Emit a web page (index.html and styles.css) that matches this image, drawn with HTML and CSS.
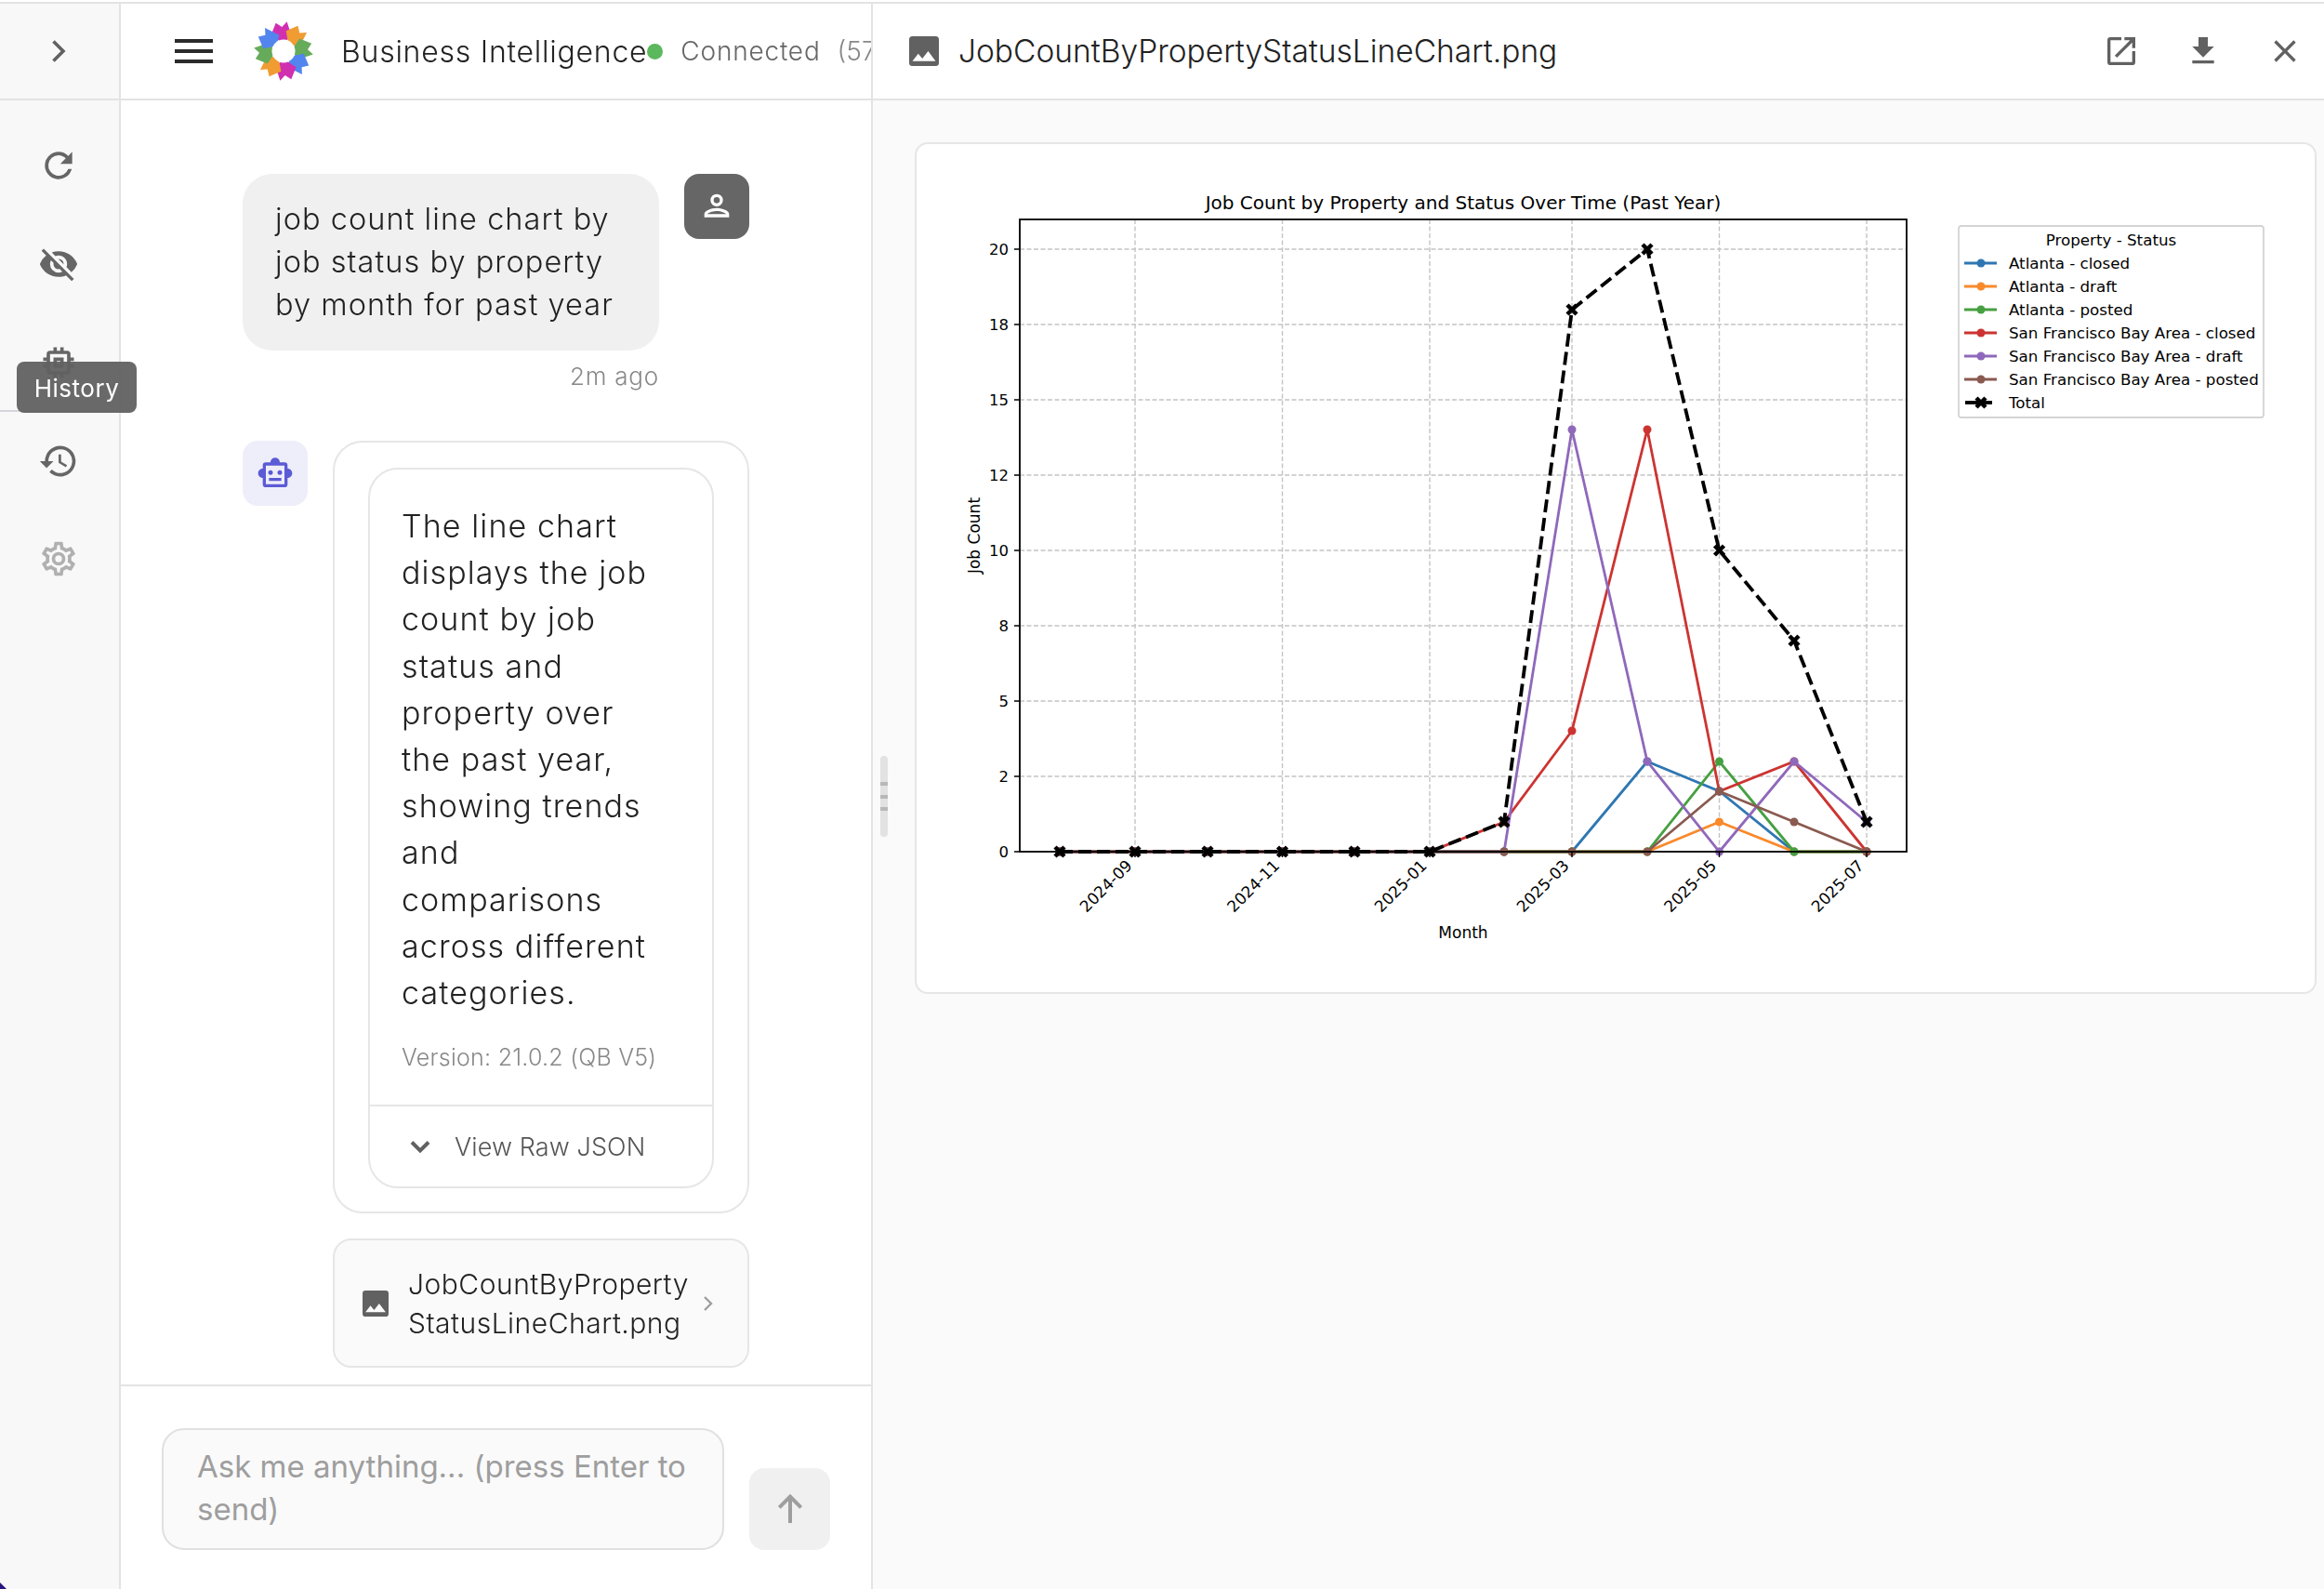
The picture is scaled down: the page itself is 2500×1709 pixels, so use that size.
FILE: index.html
```html
<!DOCTYPE html>
<html lang="en">
<head>
<meta charset="utf-8">
<title>Business Intelligence</title>
<link rel="stylesheet" href="styles.css">
</head>
<body>
<div class="app">
  <aside class="rail">
    <div class="rail-head">
      <svg class="ic-chev" viewBox="0 0 24 24"><path d="M9 5l7 7-7 7" fill="none" stroke="#616161" stroke-width="2.4"/></svg>
    </div>
    <div class="rail-top">
      <svg class="ic" viewBox="0 0 24 24"><path fill="#666" d="M17.65 6.35A7.96 7.96 0 0 0 12 4a8 8 0 1 0 7.73 10h-2.08A6 6 0 1 1 12 6c1.66 0 3.14.69 4.22 1.78L13 11h7V4l-2.35 2.35z"/></svg>
      <svg class="ic ic-eye" viewBox="0 0 24 24"><path fill="#666" d="M12 7c2.76 0 5 2.24 5 5 0 .65-.13 1.26-.36 1.83l2.92 2.92A11.8 11.8 0 0 0 23 12c-1.73-4.39-6-7.5-11-7.5-1.4 0-2.74.25-3.98.7l2.16 2.16C10.74 7.13 11.35 7 12 7zM2 4.27l2.28 2.28.46.46A11.8 11.8 0 0 0 1 12c1.73 4.39 6 7.5 11 7.5 1.55 0 3.03-.3 4.38-.84l.42.42L19.73 22 21 20.73 3.27 3 2 4.27zM7.53 9.8l1.55 1.55A2.8 2.8 0 0 0 9 12a3 3 0 0 0 3 3c.22 0 .44-.03.65-.08l1.55 1.55c-.67.33-1.41.53-2.2.53a5 5 0 0 1-5-5c0-.79.2-1.53.53-2.2zm4.31-.78l3.15 3.15L15 12a3 3 0 0 0-3-3l-.16.02z"/></svg>
      <svg class="ic" viewBox="0 0 24 24"><path fill="#666" d="M15 9H9v6h6V9zm-2 4h-2v-2h2v2zm8-2V9h-2V7a2 2 0 0 0-2-2h-2V3h-2v2h-2V3H9v2H7a2 2 0 0 0-2 2v2H3v2h2v2H3v2h2v2a2 2 0 0 0 2 2h2v2h2v-2h2v2h2v-2h2a2 2 0 0 0 2-2v-2h2v-2h-2v-2h2zm-4 6H7V7h10v10z"/></svg>
    </div>
    <div class="rail-bottom">
      <svg class="ic" viewBox="0 0 24 24"><path fill="#666" d="M13 3a9 9 0 0 0-9 9H1l3.89 3.89.07.14L9 12H6a7 7 0 1 1 2.05 4.95l-1.42 1.42A9 9 0 1 0 13 3zm-1 5v5l4.28 2.54.72-1.21-3.5-2.08V8H12z"/></svg>
      <svg class="ic" viewBox="0 0 24 24"><path fill="#b0b0b0" d="M19.43 12.98c.04-.32.07-.64.07-.98s-.03-.66-.07-.98l2.11-1.65a.5.5 0 0 0 .12-.64l-2-3.46a.5.5 0 0 0-.61-.22l-2.49 1a7.3 7.3 0 0 0-1.69-.98l-.38-2.65A.49.49 0 0 0 14 2h-4a.49.49 0 0 0-.49.42l-.38 2.65c-.61.25-1.17.59-1.69.98l-2.49-1a.57.57 0 0 0-.18-.03.5.5 0 0 0-.43.25l-2 3.46a.49.49 0 0 0 .12.64l2.11 1.65c-.04.32-.07.65-.07.98s.03.66.07.98l-2.11 1.65a.5.5 0 0 0-.12.64l2 3.46a.5.5 0 0 0 .61.22l2.49-1c.52.4 1.08.73 1.69.98l.38 2.65c.03.24.24.42.49.42h4c.25 0 .46-.18.49-.42l.38-2.65c.61-.25 1.17-.59 1.69-.98l2.49 1a.57.57 0 0 0 .18.03.5.5 0 0 0 .43-.25l2-3.46a.5.5 0 0 0-.12-.64l-2.11-1.65zm-1.98-1.71c.04.31.05.52.05.73s-.02.43-.05.73l-.14 1.13.89.7 1.08.84-.7 1.21-1.27-.51-1.04-.42-.9.68c-.43.32-.84.56-1.25.73l-1.06.43-.16 1.13-.2 1.35h-1.4l-.19-1.35-.16-1.13-1.06-.43c-.43-.18-.83-.41-1.23-.71l-.91-.7-1.06.43-1.27.51-.7-1.21 1.08-.84.89-.7-.14-1.13c-.03-.31-.05-.54-.05-.74s.02-.43.05-.73l.14-1.13-.89-.7-1.08-.84.7-1.21 1.27.51 1.04.42.9-.68c.43-.32.84-.56 1.25-.73l1.06-.43.16-1.13.2-1.35h1.39l.19 1.35.16 1.13 1.06.43c.43.18.83.41 1.23.71l.91.7 1.06-.43 1.27-.51.7 1.21-1.07.85-.89.7.14 1.13zM12 8a4 4 0 1 0 0 8 4 4 0 0 0 0-8zm0 6a2 2 0 1 1 0-4 2 2 0 0 1 0 4z"/></svg>
    </div>
    <div class="tooltip">History</div>
    <div class="corner"></div>
  </aside>

  <main class="chat">
    <header class="chat-head">
      <div class="burger"><span></span><span></span><span></span></div>
      <svg class="logo" viewBox="-32 -32 64 64">
        <polygon points="-11,-19 -4,-31 2,-26 8,-31 11,-14 0,-9" fill="#d030b0" transform="rotate(-8)"/>
        <polygon points="-11,-19 -4,-31 2,-26 8,-31 11,-14 0,-9" fill="#f09c32" transform="rotate(37)"/>
        <polygon points="-11,-19 -4,-31 2,-26 8,-31 11,-14 0,-9" fill="#66ab5a" transform="rotate(82)"/>
        <polygon points="-11,-19 -4,-31 2,-26 8,-31 11,-14 0,-9" fill="#5285ee" transform="rotate(127)"/>
        <polygon points="-11,-19 -4,-31 2,-26 8,-31 11,-14 0,-9" fill="#d030b0" transform="rotate(172)"/>
        <polygon points="-11,-19 -4,-31 2,-26 8,-31 11,-14 0,-9" fill="#f09c32" transform="rotate(217)"/>
        <polygon points="-11,-19 -4,-31 2,-26 8,-31 11,-14 0,-9" fill="#66ab5a" transform="rotate(262)"/>
        <polygon points="-11,-19 -4,-31 2,-26 8,-31 11,-14 0,-9" fill="#5285ee" transform="rotate(307)"/>
        <circle r="12.5" fill="#fff"/>
      </svg>
      <span class="brand">Business Intelligence</span>
      <span class="dot"></span>
      <span class="status">Connected</span>
      <span class="count">(57</span>
    </header>

    <div class="messages">
      <div class="user-row">
        <div class="user-col">
          <div class="bubble">job count line chart by job status by property by month for past year</div>
          <div class="time">2m ago</div>
        </div>
        <div class="avatar avatar-user">
          <svg viewBox="0 0 24 24"><path fill="#fff" d="M12 6a2 2 0 1 1 0 4 2 2 0 0 1 0-4m0 9c2.7 0 5.8 1.29 6 2H6c.23-.72 3.31-2 6-2M12 4a4 4 0 1 0 0 8 4 4 0 0 0 0-8zm0 9c-2.67 0-8 1.34-8 4v2h16v-2c0-2.66-5.33-4-8-4z"/></svg>
        </div>
      </div>

      <div class="bot-row">
        <div class="avatar avatar-bot">
          <svg viewBox="0 0 24 24"><path fill="#5b5bd6" d="M20 9V7a2 2 0 0 0-2-2h-3c0-1.66-1.34-3-3-3S9 3.34 9 5H6a2 2 0 0 0-2 2v2c-1.66 0-3 1.34-3 3s1.34 3 3 3v4a2 2 0 0 0 2 2h12a2 2 0 0 0 2-2v-4c1.66 0 3-1.34 3-3s-1.34-3-3-3zm-2 10H6V7h12v12zm-9-6a1.5 1.5 0 1 0 0-3 1.5 1.5 0 0 0 0 3zm6 0a1.5 1.5 0 1 0 0-3 1.5 1.5 0 0 0 0 3zm-7 2h8v2H8v-2z"/></svg>
        </div>
        <div class="bot-col">
          <div class="outer-card">
            <div class="inner-card">
              <div class="answer">
                <p class="answer-text">The line chart displays the job count by job status and property over the past year, showing trends and comparisons across different categories.</p>
                <p class="version">Version: 21.0.2 (QB V5)</p>
              </div>
              <div class="raw">
                <svg class="raw-chev" viewBox="0 0 24 24"><path d="M6 9l6 6 6-6" fill="none" stroke="#616161" stroke-width="2.6"/></svg>
                <span>View Raw JSON</span>
              </div>
            </div>
          </div>
          <div class="attachment">
            <svg class="att-ic" viewBox="3 3 18 18"><path fill="#616161" d="M21 19V5a2 2 0 0 0-2-2H5a2 2 0 0 0-2 2v14a2 2 0 0 0 2 2h14a2 2 0 0 0 2-2zM8.5 13.5l2.5 3.01L14.5 12l4.5 6H5l3.5-4.5z"/></svg>
            <span class="att-name">JobCountByProperty<br>StatusLineChart.png</span>
            <svg class="att-chev" viewBox="0 0 24 24"><path d="M9 5l7 7-7 7" fill="none" stroke="#9e9e9e" stroke-width="2.4"/></svg>
          </div>
        </div>
      </div>
    </div>

    <footer class="composer">
      <div class="input">Ask me anything... (press Enter to send)</div>
      <div class="send">
        <svg viewBox="0 0 24 24"><path d="M12 21V4M5 11l7-7 7 7" fill="none" stroke="#9e9e9e" stroke-width="2.4"/></svg>
      </div>
    </footer>
    <div class="handle"><i></i><i></i><i></i></div>
  </main>

  <section class="viewer">
    <header class="viewer-head">
      <svg class="view-ic" viewBox="3 3 18 18"><path fill="#616161" d="M21 19V5a2 2 0 0 0-2-2H5a2 2 0 0 0-2 2v14a2 2 0 0 0 2 2h14a2 2 0 0 0 2-2zM8.5 13.5l2.5 3.01L14.5 12l4.5 6H5l3.5-4.5z"/></svg>
      <span class="view-title">JobCountByPropertyStatusLineChart.png</span>
      <div class="view-actions">
        <svg viewBox="0 0 24 24"><path fill="#616161" d="M19 19H5V5h7V3H5a2 2 0 0 0-2 2v14a2 2 0 0 0 2 2h14a2 2 0 0 0 2-2v-7h-2v7zM14 3v2h3.59l-9.83 9.83 1.41 1.41L19 6.41V10h2V3h-7z"/></svg>
        <svg viewBox="0 0 24 24"><path fill="#616161" d="M19 9h-4V3H9v6H5l7 7 7-7zM5 18v2h14v-2H5z"/></svg>
        <svg viewBox="0 0 24 24"><path fill="#616161" d="M19 6.41L17.59 5 12 10.59 6.41 5 5 6.41 10.59 12 5 17.59 6.41 19 12 13.41 17.59 19 19 17.59 13.41 12z"/></svg>
      </div>
    </header>
    <div class="viewer-body">
      <div class="image-card">
        <svg class="chart" viewBox="986 155 1504 912">
          <defs>
            <marker id="m-blue" viewBox="-5 -5 10 10" markerWidth="10" markerHeight="10" markerUnits="userSpaceOnUse"><circle r="4.5" fill="#2f77b2"/></marker>
            <marker id="m-orange" viewBox="-5 -5 10 10" markerWidth="10" markerHeight="10" markerUnits="userSpaceOnUse"><circle r="4.5" fill="#f88a2c"/></marker>
            <marker id="m-green" viewBox="-5 -5 10 10" markerWidth="10" markerHeight="10" markerUnits="userSpaceOnUse"><circle r="4.5" fill="#46a041"/></marker>
            <marker id="m-red" viewBox="-5 -5 10 10" markerWidth="10" markerHeight="10" markerUnits="userSpaceOnUse"><circle r="4.5" fill="#cc3431"/></marker>
            <marker id="m-purple" viewBox="-5 -5 10 10" markerWidth="10" markerHeight="10" markerUnits="userSpaceOnUse"><circle r="4.5" fill="#8f68bb"/></marker>
            <marker id="m-brown" viewBox="-5 -5 10 10" markerWidth="10" markerHeight="10" markerUnits="userSpaceOnUse"><circle r="4.5" fill="#8a5a50"/></marker>
            <marker id="m-x" viewBox="-8 -8 16 16" markerWidth="16" markerHeight="16" markerUnits="userSpaceOnUse"><path d="M-5-5L5 5M-5 5L5-5" stroke="#000" stroke-width="4.5"/></marker>
          </defs>
          <text class="t-title" x="1574" y="225" text-anchor="middle">Job Count by Property and Status Over Time (Past Year)</text>
          <g class="grid">
            <path d="M1221 236V916M1379.5 236V916M1538 236V916M1691 236V916M1849.5 236V916M2008 236V916"/>
            <path d="M1097 268H2051M1097 349H2051M1097 430H2051M1097 511H2051M1097 592H2051M1097 673H2051M1097 754H2051M1097 835H2051"/>
          </g>
          <g class="series">
            <polyline stroke="#2f77b2" marker-start="url(#m-blue)" marker-mid="url(#m-blue)" marker-end="url(#m-blue)" points="1140,916 1221,916 1299,916 1379.5,916 1457,916 1538,916 1618,916 1691,916 1772,819 1849.5,851 1930,916 2008,916"/>
            <polyline stroke="#f88a2c" marker-start="url(#m-orange)" marker-mid="url(#m-orange)" marker-end="url(#m-orange)" points="1140,916 1221,916 1299,916 1379.5,916 1457,916 1538,916 1618,916 1691,916 1772,916 1849.5,884 1930,916 2008,916"/>
            <polyline stroke="#46a041" marker-start="url(#m-green)" marker-mid="url(#m-green)" marker-end="url(#m-green)" points="1140,916 1221,916 1299,916 1379.5,916 1457,916 1538,916 1618,916 1691,916 1772,916 1849.5,819 1930,916 2008,916"/>
            <polyline stroke="#cc3431" marker-start="url(#m-red)" marker-mid="url(#m-red)" marker-end="url(#m-red)" points="1140,916 1221,916 1299,916 1379.5,916 1457,916 1538,916 1618,884 1691,786 1772,462 1849.5,851 1930,819 2008,916"/>
            <polyline stroke="#8f68bb" marker-start="url(#m-purple)" marker-mid="url(#m-purple)" marker-end="url(#m-purple)" points="1140,916 1221,916 1299,916 1379.5,916 1457,916 1538,916 1618,916 1691,462 1772,819 1849.5,916 1930,819 2008,884"/>
            <polyline stroke="#8a5a50" marker-start="url(#m-brown)" marker-mid="url(#m-brown)" marker-end="url(#m-brown)" points="1140,916 1221,916 1299,916 1379.5,916 1457,916 1538,916 1618,916 1691,916 1772,916 1849.5,851 1930,884 2008,916"/>
            <polyline class="total" marker-start="url(#m-x)" marker-mid="url(#m-x)" marker-end="url(#m-x)" points="1140,916 1221,916 1299,916 1379.5,916 1457,916 1538,916 1618,884 1691,333 1772,268 1849.5,592 1930,689 2008,884"/>
          </g>
          <rect class="frame" x="1097" y="236" width="954" height="680"/>
          <g class="ticks">
            <path d="M1221 916v6M1379.5 916v6M1538 916v6M1691 916v6M1849.5 916v6M2008 916v6M1097 268h-6M1097 349h-6M1097 430h-6M1097 511h-6M1097 592h-6M1097 673h-6M1097 754h-6M1097 835h-6M1097 916h-6"/>
          </g>
          <g class="t-y" text-anchor="end">
            <text x="1085" y="274">20</text><text x="1085" y="355">18</text><text x="1085" y="436">15</text><text x="1085" y="517">12</text><text x="1085" y="598">10</text><text x="1085" y="679">8</text><text x="1085" y="760">5</text><text x="1085" y="841">2</text><text x="1085" y="922">0</text>
          </g>
          <g class="t-x" text-anchor="end">
            <text transform="translate(1219 932) rotate(-45)">2024-09</text>
            <text transform="translate(1377.5 932) rotate(-45)">2024-11</text>
            <text transform="translate(1536 932) rotate(-45)">2025-01</text>
            <text transform="translate(1689 932) rotate(-45)">2025-03</text>
            <text transform="translate(1847.5 932) rotate(-45)">2025-05</text>
            <text transform="translate(2006 932) rotate(-45)">2025-07</text>
          </g>
          <text class="t-label" x="1574" y="1009" text-anchor="middle">Month</text>
          <text class="t-label" transform="translate(1054 576) rotate(-90)" text-anchor="middle">Job Count</text>
          <rect class="legend-box" x="2107" y="243" width="328" height="206" rx="3"/>
          <g class="t-legend">
            <text x="2271" y="263.5" text-anchor="middle">Property - Status</text>
            <text x="2161" y="288.5">Atlanta - closed</text>
            <text x="2161" y="313.5">Atlanta - draft</text>
            <text x="2161" y="338.5">Atlanta - posted</text>
            <text x="2161" y="363.5">San Francisco Bay Area - closed</text>
            <text x="2161" y="388.5">San Francisco Bay Area - draft</text>
            <text x="2161" y="413.5">San Francisco Bay Area - posted</text>
            <text x="2161" y="439">Total</text>
          </g>
          <g class="series">
            <polyline stroke="#2f77b2" marker-mid="url(#m-blue)" points="2113,283 2131,283 2148,283"/>
            <polyline stroke="#f88a2c" marker-mid="url(#m-orange)" points="2113,308 2131,308 2148,308"/>
            <polyline stroke="#46a041" marker-mid="url(#m-green)" points="2113,333 2131,333 2148,333"/>
            <polyline stroke="#cc3431" marker-mid="url(#m-red)" points="2113,358 2131,358 2148,358"/>
            <polyline stroke="#8f68bb" marker-mid="url(#m-purple)" points="2113,383 2131,383 2148,383"/>
            <polyline stroke="#8a5a50" marker-mid="url(#m-brown)" points="2113,408 2131,408 2148,408"/>
            <polyline class="total-key" marker-mid="url(#m-x)" points="2114,433 2131,433 2143,433"/>
          </g>
        </svg>
      </div>
    </div>
  </section>
</div>
</body>
</html>
```
FILE: styles.css
```css
* { box-sizing: border-box; }
html, body { margin: 0; height: 100%; }
body { font-family: "Inter", "Noto Sans", sans-serif; color: #2b2b2b; background: #fff; overflow: hidden; padding-top: 2px; }
.app { display: flex; width: 2500px; height: 1707px; border-top: 2px solid #e3e3e3; overflow: hidden; filter: blur(0.4px); }

.rail { position: relative; flex: 0 0 130px; background: #f8f8f8; border-right: 2px solid #e3e3e3; display: flex; flex-direction: column; }
.rail-head { height: 104px; border-bottom: 2px solid #e3e3e3; display: flex; align-items: center; justify-content: center; margin-right: -2px; padding-right: 7px; }
.ic-chev { width: 36px; height: 36px; }
.rail-top { height: 335px; border-bottom: 2px solid #d4d6dc; display: flex; flex-direction: column; align-items: center; gap: 62px; padding: 48px 3px 0 0; }
.rail-bottom { display: flex; flex-direction: column; align-items: center; gap: 61px; padding: 31px 3px 0 0; }
.ic { width: 44px; height: 44px; display: block; flex: none; }
.tooltip { position: absolute; left: 18px; top: 385px; width: 129px; height: 55px; padding-top: 2px; background: rgba(97,97,97,.95); color: #fff; border-radius: 8px; font-size: 26px; letter-spacing: .5px; display: flex; align-items: center; justify-content: center; z-index: 3; }
.corner { position: absolute; left: 0; bottom: 0; width: 7px; height: 7px; background: #2a1480; clip-path: polygon(0 0, 100% 100%, 0 100%); }

.chat { position: relative; flex: 0 0 809px; display: flex; flex-direction: column; border-right: 2px solid #e3e3e3; min-width: 0; }
.chat-head { height: 104px; flex: none; border-bottom: 2px solid #e3e3e3; display: flex; align-items: center; padding-left: 58px; white-space: nowrap; overflow: hidden; }
.chat-head > * { flex: none; }
.burger { width: 41px; display: flex; flex-direction: column; gap: 6.5px; }
.burger span { display: block; height: 4.5px; background: #2b2b2b; }
.logo { width: 64px; height: 64px; margin-left: 44px; }
.brand { margin-left: 30px; font-size: 32px; font-weight: 300; color: #222; letter-spacing: 0.75px; }
.dot { width: 17px; height: 17px; border-radius: 50%; background: #5cb85c; }
.status { margin-left: 19px; font-size: 28px; font-weight: 300; color: #666; letter-spacing: .8px; }
.count { margin-left: 18px; font-size: 28px; font-weight: 300; color: #888; }

.messages { flex: 1; padding: 79px 0 0 131px; display: flex; flex-direction: column; min-height: 0; }
.user-row { display: flex; gap: 27px; align-items: flex-start; }
.user-col { width: 448px; }
.bubble { background: #f0f0f0; border-radius: 32px; padding: 26px 30px 26px 35px; height: 190px; font-size: 32.5px; font-weight: 300; letter-spacing: 1.05px; line-height: 46px; color: #222; }
.time { text-align: right; font-size: 26px; font-weight: 300; letter-spacing: .8px; color: #888; margin-top: 11px; line-height: 34px; }
.avatar { width: 70px; height: 70px; border-radius: 16px; display: flex; align-items: center; justify-content: center; flex: none; }
.avatar svg { width: 40px; height: 40px; }
.avatar-user { background: #666; }
.avatar-bot { background: #eeeefb; }
.bot-row { display: flex; gap: 27px; align-items: flex-start; margin-top: 52px; }
.bot-col { width: 448px; display: flex; flex-direction: column; gap: 27px; }
.outer-card { border: 2px solid #e6e6e6; border-radius: 32px; padding: 27px 36px; height: 831px; }
.inner-card { border: 2px solid #e6e6e6; border-radius: 32px; height: 775px; display: flex; flex-direction: column; }
.answer { flex: none; height: 685px; padding: 36px 48px 0 34px; border-bottom: 2px solid #e6e6e6; }
.answer-text { margin: 0; font-size: 34px; font-weight: 300; letter-spacing: 1.1px; line-height: 50.2px; color: #222; }
.version { margin: 26px -40px 0 0; font-size: 25px; font-weight: 300; letter-spacing: .25px; line-height: 36px; color: #888; white-space: nowrap; }
.raw { flex: 1; display: flex; align-items: center; padding-left: 36px; gap: 19px; color: #555; font-size: 27px; font-weight: 300; letter-spacing: .1px; }
.raw-chev { width: 36px; height: 36px; }
.attachment { height: 139px; border: 2px solid #e6e6e6; border-radius: 20px; background: #fafafa; display: flex; align-items: center; padding-left: 30px; }
.att-ic { width: 28px; height: 28px; flex: none; }
.att-name { margin-left: 21px; font-size: 30px; font-weight: 300; letter-spacing: .5px; line-height: 42px; color: #222; white-space: nowrap; flex: 1; }
.att-chev { width: 24px; height: 24px; margin-right: 31px; }

.composer { height: 220px; flex: none; border-top: 2px solid #e3e3e3; display: flex; align-items: flex-end; padding: 0 43px 42px 44px; gap: 27px; }
.input { width: 605px; height: 131px; border: 2px solid #e0e0e0; border-radius: 24px; background: #fafafa; padding: 16px 36px; font-size: 33px; line-height: 46px; color: #9e9e9e; }
.send { width: 87px; height: 88px; border-radius: 16px; background: #f0f0f0; display: flex; align-items: center; justify-content: center; flex: none; }
.send svg { width: 40px; height: 40px; }
.handle { position: absolute; right: -18px; top: 809px; width: 8px; height: 87px; background: #e2e2e2; border-radius: 4px; display: flex; flex-direction: column; align-items: center; justify-content: center; gap: 9.5px; z-index: 2; }
.handle i { display: block; width: 8px; height: 4px; background: #b8b8b8; }

.viewer { flex: 1; min-width: 0; display: flex; flex-direction: column; background: #fafafa; }
.viewer-head { height: 104px; flex: none; background: #fff; border-bottom: 2px solid #e3e3e3; display: flex; align-items: center; padding-left: 39px; }
.view-ic { width: 32px; height: 32px; flex: none; }
.view-title { margin-left: 21px; font-size: 33.5px; font-weight: 300; color: #222; white-space: nowrap; flex: 1; }
.view-actions { display: flex; gap: 48px; padding-right: 22px; }
.view-actions svg { width: 40px; height: 40px; }
.viewer-body { padding: 45px 8px 0 45px; }
.image-card { height: 916px; background: #fff; border: 2px solid #e6e6e6; border-radius: 14px; overflow: hidden; }
.chart { display: block; width: 1504px; height: 912px; font-family: "DejaVu Sans", sans-serif; fill: #000; }

.t-title { font-size: 20px; }
.grid path { fill: none; stroke: #c4c4c4; stroke-width: 1.4; stroke-dasharray: 5 2.5; }
.series polyline { fill: none; stroke-width: 2.8; }
.series .total { stroke: #000; stroke-width: 3.8; stroke-dasharray: 14 6; }
.series .total-key { stroke: #000; stroke-width: 3.8; }
.frame { fill: none; stroke: #000; stroke-width: 1.8; }
.ticks path { fill: none; stroke: #000; stroke-width: 1.4; }
.t-y text { font-size: 16.5px; }
.t-x text { font-size: 17px; }
.t-label { font-size: 17px; }
.legend-box { fill: #fff; stroke: #d4d4d4; stroke-width: 1.8; }
.t-legend text { font-size: 16.7px; }
```
